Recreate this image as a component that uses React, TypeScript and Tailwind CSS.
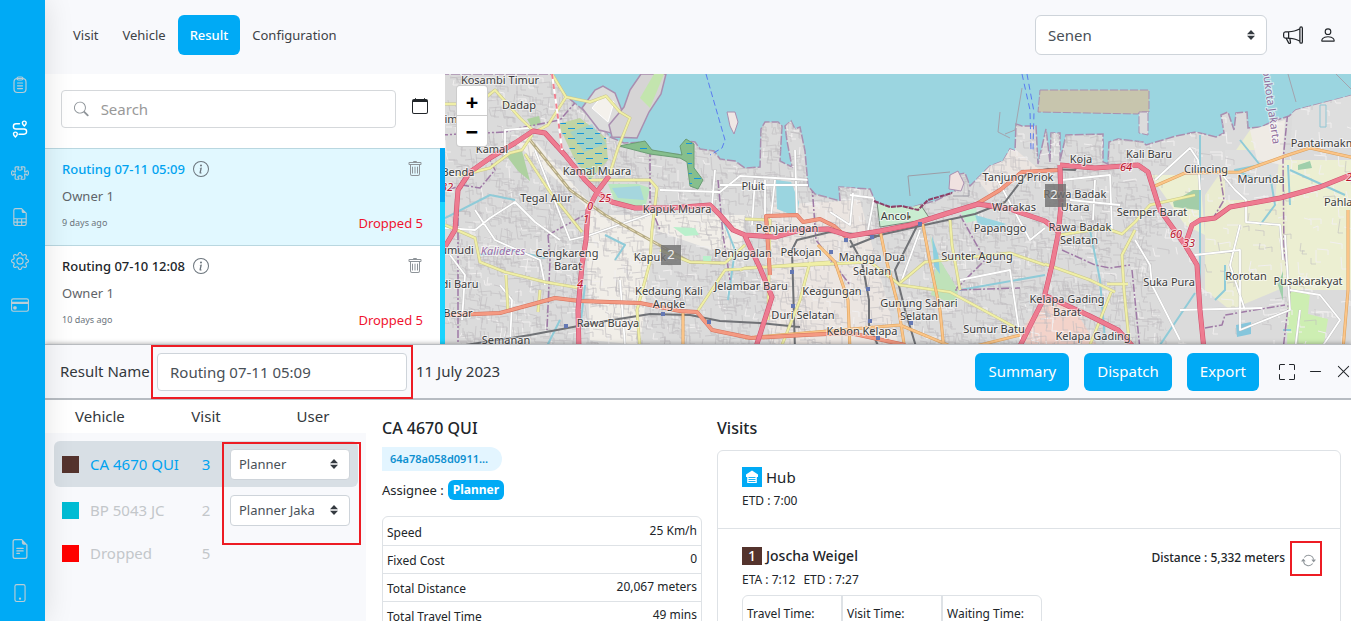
import { useState } from 'react';
import type { ReactNode } from 'react';
import {
  BsArrowRepeat,
  BsCalendar,
  BsCreditCard,
  BsDashLg,
  BsFileEarmarkSpreadsheet,
  BsFileEarmarkText,
  BsFullscreen,
  BsGear,
  BsInfoCircle,
  BsMegaphone,
  BsPerson,
  BsPhone,
  BsPuzzle,
  BsSearch,
  BsTrash,
  BsXLg,
} from 'react-icons/bs';

const routings = [
  { id: 1, name: 'Routing 07-11 05:09', owner: 'Owner 1', age: '9 days ago', dropped: 5 },
  { id: 2, name: 'Routing 07-10 12:08', owner: 'Owner 1', age: '10 days ago', dropped: 5 },
];

const vehicles = [
  { name: 'CA 4670 QUI', visits: 3, color: '#54332d', user: 'Planner' },
  { name: 'BP 5043 JC', visits: 2, color: '#00bcd4', user: 'Planner Jaka' },
  { name: 'Dropped', visits: 5, color: '#ff0000', user: null },
];

const stats = [
  ['Speed', '25 Km/h'],
  ['Fixed Cost', '0'],
  ['Total Distance', '20,067 meters'],
  ['Total Travel Time', '49 mins'],
];

function ClipboardIcon() {
  return (
    <svg width="18" height="18" viewBox="0 0 18 18" fill="none" stroke="currentColor" strokeWidth="1.2" strokeLinecap="round">
      <rect x="3" y="2.5" width="12" height="14" rx="3.5" />
      <rect x="6" y="1" width="6" height="3" rx="1.5" />
      <path d="M6.5 7h5M6.5 9.800h5M6.500 12.600h5" />
    </svg>
  );
}

function RouteIcon() {
  return (
    <svg width="18" height="18" viewBox="0 0 18 18" fill="none" stroke="currentColor" strokeWidth="1.4" strokeLinecap="round">
      <path d="M8.5 3.8H5a2.6 2.6 0 0 0 0 5.2h8a2.6 2.6 0 0 1 0 5.2H8" />
      <path d="M13.300 6c-1.300-1.200-1.900-2-1.900-3a1.900 1.900 0 0 1 3.800 0c0 1-.6 1.800-1.900 3zM4.400 17c-1.300-1.200-1.900-2-1.900-3a1.900 1.900 0 0 1 3.800 0c0 1-.6 1.800-1.900 3z" />
    </svg>
  );
}

function HubIcon() {
  return (
    <svg className="size-5 shrink-0" viewBox="0 0 20 20">
      <rect width="20" height="20" fill="#00aaf5" />
      <path d="M10 3.500 16 7.500V10h-1.200v6H5.200v-6H4V7.500z" fill="#fff" />
      <path d="M6.500 10.500h7M6.500 12.500h7M6.500 14.500h7" stroke="#00aaf5" strokeWidth=".9" />
    </svg>
  );
}

function Chevrons() {
  return (
    <svg className="pointer-events-none absolute top-1/2 right-3 h-[10px] w-2 -translate-y-1/2" viewBox="0 0 8 10" fill="#343a40">
      <path d="M4 0 8 4.200H0zM4 10 0 5.800h8z" />
    </svg>
  );
}

// street level labels, x is the middle of the text and y the baseline
const labels: [string, number, number][] = [
  ['Kosambi Timur', 500, 84],
  ['Dadap', 519, 109],
  ['Kamal', 492, 153],
  ['Benda', 458, 176],
  ['Kamal Muara', 597, 175],
  ['Tegal Alur', 546, 202],
  ['Kapuk Muara', 677, 213],
  ['Pluit', 753, 190],
  ['Cengkareng', 567, 257],
  ['Barat', 568, 270],
  ['Kapuk', 650, 261],
  ['umudi', 457, 254],
  ['di Baru', 460, 288],
  ['Besar', 458, 317],
  ['Kedaung Kali', 669, 295],
  ['Angke', 669, 308],
  ['Rawa Buaya', 608, 327],
  ['Semanan', 506, 344],
  ['Penjaringan', 787, 232],
  ['Penjagalan', 743, 257],
  ['Pekojan', 801, 256],
  ['Jelambar Baru', 751, 290],
  ['Mangga Dua', 872, 261],
  ['Selatan', 872, 275],
  ['Keagungan', 832, 295],
  ['Gunung Sahari', 919, 307],
  ['Selatan', 919, 320],
  ['Duri Selatan', 803, 319],
  ['Kebon Kelapa', 862, 335],
  ['Ancol', 895, 220],
  ['Warakas', 1014, 211],
  ['Papanggo', 1000, 232],
  ['Sunter Agung', 977, 260],
  ['Sumur Batu', 994, 333],
  ['Tanjung Priok', 1018, 181],
  ['Koja', 1081, 163],
  ['Kali Baru', 1149, 158],
  ['Rawa Badak', 1075, 198],
  ['Utara', 1075, 211],
  ['Rawa Badak', 1080, 231],
  ['Selatan', 1079, 244],
  ['Semper Barat', 1152, 216],
  ['Cilincing', 1206, 173],
  ['Marunda', 1261, 183],
  ['Pantaimakmur', 1329, 147],
  ['Pahlawan', 1349, 206],
  ['Suka Pura', 1169, 286],
  ['Rorotan', 1246, 280],
  ['Pusakarakyat', 1308, 285],
  ['Kelapa Gading', 1067, 303],
  ['Barat', 1067, 316],
  ['Kelapa Gading', 1093, 340],
];

const COAST =
  'M440 74H552l14 22 17 14 12 12 15 15 14 6 21-1 6 8 12 4 27 1-8-8 3-6 10 1 5 7 14 2 6 8 15 2 10 7 15 -1 1-38 4-7h13l4 4-2 35 12 6-5-26-2-15 6-5 4 8 5-2 5 24 3 35 7 8 25 7-1-14 31 2 6 14 9 3 27 1 23-6 20-10-5-15 15-3 5 13 20-20 13-5 7-12 5 2 1-27 6 2h14l2 38 8-35 4 33 1-29h9v28l6-26 37-1v28l5 2 1-22 9-3 25 3 3 3 30-9 20-4 20 5 8-4-3-18 7-3 6 18 2-17 11-1 1 16 13-1 10-5 18-6 7-6 61-16V350H440z';

const TRUNK = [
  'M440 255 455 230 458 190 470 172 490 158 515 143 533 131 545 133 565 155 585 180 597 192 612 202 635 208 670 208 710 205 720 215 733 230 745 235 775 237 800 230 828 229 850 236 880 231 910 225 945 214 978 204 1010 209 1045 221 1060 233',
  'M609 176 597 192 588 210 586 240 582 265 578 310 579 350',
  'M745 236 760 268 772 297 755 350',
  'M1060 165 1061 205 1058 235 1052 265 1044 298 1018 350',
  'M1060 165 1095 168 1138 165 1148 172 1160 210 1185 245 1197 265 1200 310 1204 350',
  'M1185 245 1192 225 1200 220 1215 218 1230 207 1280 198 1320 187 1355 173',
  'M1044 295 1090 316 1118 330 1136 350',
];

const PRIMARY = [
  'M440 316 450 315 500 313 555 298 580 301 640 303 680 311 697 312 712 330 751 338 805 335 850 333 905 345',
  'M770 275 766 216 797 215 803 222 820 219 834 226 846 237',
  'M975 205 1000 190 1022 172 1060 170',
];

const SECONDARY = [
  'M922 220 930 262 940 310 944 350',
  'M1155 186 1185 173 1240 172 1285 156 1310 148 1355 158',
  'M1348 210 1348 290 1343 350',
  'M818 245 835 262 848 300 850 350',
  'M880 230 885 255 898 305 905 350',
  'M683 313 683 350',
  'M745 338 900 325 960 350 1020 335',
];

const TERTIARY = [
  'M440 104H478L495 90 520 118 535 132 548 125 566 97 552 74',
  'M566 97 590 102 606 96 620 112 630 118 618 148 609 176',
  'M532 135 522 150 510 153 490 168 458 176',
  'M525 154 550 192 582 232',
  'M445 225 475 238 480 262 505 272 545 282 580 288',
  'M585 180 650 180 657 188 652 230 650 262 637 310 640 350',
  'M660 250 690 262 725 263 745 245',
  'M697 312 725 270 790 265 830 262',
  'M745 219 770 220 768 320',
  'M740 270 745 268 870 262 900 285 950 292 1020 330',
  'M900 283 925 262 1010 253 1045 265',
  'M950 220 952 245 960 290',
  'M1045 264 1090 280 1115 292',
  'M1060 235 1105 228 1122 234 1135 222 1150 205 1195 195',
  'M1135 230 1122 255 1124 290 1130 350',
  'M1107 284 1128 284M1112 290 1090 345',
  'M780 350 800 300 810 262',
  'M506 275 508 312M540 290 538 312',
];

const WHITE = [
  'M445 228 475 230 490 218 515 202 535 222 560 240',
  'M475 210 495 240 540 260 545 285',
  'M535 150 570 240 590 235 650 214',
  'M505 155 505 130 530 128',
  'M660 190 720 192 740 176 810 180',
  'M715 170 712 205M755 180 752 225M765 180 765 215M720 185 808 185',
  'M795 150 797 215M775 180 770 225',
  'M850 195 874 198 868 230M830 212 850 225 853 193',
  'M920 230 900 285M960 280 1010 270 1022 350',
  'M995 175 1030 240 1045 228',
  'M1062 180 1110 175 1112 230M1070 200 1120 205M1095 180 1093 220',
  'M1155 180 1190 148 1198 160 1200 190',
  'M1135 240 1150 265 1152 285 1180 340M1195 255 1240 250 1240 330 1290 310 1285 235',
  'M1240 225 1230 265 1245 310M1220 172 1235 190 1246 200 1246 222 1280 225 1283 260',
  'M1180 310 1262 308M1290 290 1320 295 1340 320 1320 350M1300 310 1295 350',
  'M450 255 465 275 462 320M510 345 512 300 500 285M620 280 625 345',
];

const RAIL = [
  'M440 349 530 335 600 322 650 314 690 315 720 321 760 323 800 327',
  'M795 350 792 250 797 240 830 232 880 236',
  'M918 224 900 260 895 270 905 310 917 350',
  'M850 240 862 262 869 300 869 325 880 350',
  'M850 247 880 235 920 226 975 214 1005 202 1027 173 1048 169 1075 170 1080 160',
];

const BOUNDARY = [
  'M440 135 505 132 520 128 560 120 600 74',
  'M448 190 462 185 480 188 495 170 490 160',
  'M458 190 458 350M548 235 550 260 547 330M548 235 590 212',
  'M650 135 650 205 660 230M718 180 723 235 730 280',
  'M812 185 816 240 850 285',
  'M960 215 985 260 955 290 1020 288',
  'M1132 270 1140 350M1062 250 1095 265 1110 268 1130 265',
  'M1276 74 1288 110 1283 160 1284 250 1290 290 1283 350',
  'M1212 220 1224 200 1220 175M1205 328 1222 325 1225 315 1285 305',
];

const COMMON_GREEN = '#aed1a0';

// short side streets, spread by a fixed seed so the map is the same every time
function sideStreets(count: number, start: number, right: number) {
  let seed = start;
  const next = () => {
    seed = (seed * 16807) % 2147483647;
    return seed / 2147483647;
  };
  let d = '';
  for (let i = 0; i < count; i++) {
    const x = Math.round(445 + next() * (right - 445));
    const y = Math.round(76 + next() * 270);
    const len = Math.round(4 + next() * 10);
    const skew = Math.round(next() * 4) - 2;
    d += next() > 0.5 ? `M${x} ${y}l${len} ${skew}v5` : `M${x} ${y}l${skew} ${len}h5`;
  }
  return d;
}

const streetsLight = sideStreets(650, 17, 1351);
const streetsDark = sideStreets(3200, 4099, 1160);
const streetsEast = sideStreets(260, 811, 1351);

function Paths({ list, stroke, width, dash }: { list: string[]; stroke: string; width: number; dash?: string }) {
  return (
    <path d={list.join('')} fill="none" stroke={stroke} strokeWidth={width} strokeDasharray={dash} strokeLinejoin="round" />
  );
}

function CityMap() {
  return (
    <svg
      className="absolute inset-0 size-full"
      viewBox="445 74 906 270"
      preserveAspectRatio="xMinYMin slice"
      role="img"
      aria-label="Map of Jakarta"
    >
      <defs>
        <clipPath id="land">
          <path d={COAST} />
        </clipPath>
        <pattern id="marsh" width="18" height="10" patternUnits="userSpaceOnUse">
          <path d="M1 3.500h7M10 8.500h7" stroke="#1496dc" strokeWidth="1" />
        </pattern>
      </defs>
      <rect x="440" y="70" width="920" height="290" fill="#9bd5e0" />
      <path d={COAST} fill="#dbdbdb" stroke="#a98fb0" strokeWidth="1.5" strokeDasharray="9 2" />

      <g clipPath="url(#land)">
        <path d="M515 143 585 205 590 340 640 345 655 230 740 260 745 215 600 215 530 135z" fill="#f1eee8" />
        <path d="M770 205 860 200 900 350H770zM965 165l45-20 30 25-50 25z" fill="#ebe5e1" />
        <path d="M1205 195 1250 130 1285 160 1355 165V290L1290 285 1230 310 1205 290z" fill="#eaecd0" />
        <path d="M1150 175h50l5 60-20-10zM1285 160h70v130h-65z" fill="#ecefd2" />
        <path d="M1225 150h55l-5 50h-50zM1295 74h60v70l-65 10z" fill="#dedede" />
        <path d="M1250 130l35-10-3 45-25-5z" fill="#efebe5" />
        <path d="M1045 295l30 15 25 40h-75zM1018 335l25-35-10 50z" fill="#f3d3ca" />
        <path d="M1288 292h22l-2 22 20 5-5 30h-36z" fill="#cdeeb2" />
        <path d={streetsLight} fill="none" stroke="#f1efef" strokeWidth="1" />
        <path d={streetsDark} fill="none" stroke="#c0bcc0" strokeWidth=".6" />
        <path d={streetsEast} fill="none" stroke="#c0bcc0" strokeWidth=".6" />

        <path d="M558 124 580 118 606 138 608 160 590 180 575 160z" fill="#c0d4a4" />
        <path d="M570 132l22-8 14 20-22 8z" fill="#8fd0db" opacity=".6" />
        <path d="M558 124 580 118 606 138 608 160 590 180 575 160z" fill="url(#marsh)" />
        <path d="M506 155l16-4 8 30-12-10zM527 119l12-3 2 8-10 2z" fill={COMMON_GREEN} />
        <path d="M608 184h30l12 4-5 20-30-6z" fill="#b9e6c0" />
        <path d="M612 188l28-2 4 14-26-2z" fill="#a5d6de" />
        <path d="M673 227l22 1 4 7-14 1zM703 256h8v8h-8z" fill="#baf0cc" />
        <path d="M776 180l15 2 8 20-2 15-20-8z" fill="#9bd5e0" />
        <path d="M877 202l43 2 10 15-50 8z" fill="#c9ecd0" stroke="#75887a" />
        <path d="M930 235l6 30-5 30 25 10 2-15-18-30z" fill="#bfe2b9" />
        <path d="M932 236l6 18 2 20-6-8z" fill="#8ccfdf" />
        <path d="M961 212l15-4 2 12-12 3z" fill="#c0efcf" />
        <path d="M975 215l25 7 6 2-8 4-20-4z" fill="#9bd5e0" />
        <path d="M1173 202l20-12h8l-2 20-25-3z" fill="#a3cda8" />
        <path d="M1153 262l20-10 15 8 10 20-2 70-30-20-12-40z" fill="#dbdbdb" />
        <path d="M1278 285l5-14v30zM1298 165l12-4 2 7-14 2z" fill="#9fcfab" />
        <path d="M1236 325l15-3v12l-14 3z" fill="#86c6dc" />
        <path d="M1320 105h6v22h-6z" fill="#dedede" stroke="#8fc6d4" />
        <Paths
          list={[
            'M445 218 490 195 515 200M480 255 510 250 545 258M585 285 580 330M560 320 545 350',
            'M605 235 625 245 615 260M1288 165 1290 205M1270 175 1275 205 1260 225M1200 135V310',
            'M1195 293 1160 345M1225 265v25l-10 10M960 290 1045 275M1283 330h8M1290 170l55 25M1240 140l20 25-25 5 18 8',
            'M720 212 735 250 728 300M1090 230 1100 280 1105 340',
          ]}
          stroke="#8fcbd8"
          width={2}
        />
        <Paths list={BOUNDARY} stroke="#9f7aa6" width={1.5} dash="8 2 2 2" />
        <Paths list={WHITE} stroke="#bfbfbf" width={2.6} />
        <Paths list={WHITE} stroke="#fff" width={1.8} />
        <Paths list={RAIL} stroke="#707276" width={2} />
        <Paths list={['M530 140 570 190 605 215 650 240 690 262 720 263']} stroke="#b5ab86" width={3} />
        <Paths list={['M530 140 570 190 605 215 650 240 690 262 720 263']} stroke="#eee3bd" width={1} dash="6 3" />
      </g>

      <path d="M582 108l13-18 8-4 12 7 7 18-11 22-12-3z" fill="#dcdcdc" stroke="#a98fb0" strokeWidth="1.500" />
      <path d="M592 108l10-12 12 6-6 20z" fill="#f4f1ec" stroke="#fff" />
      <path d="M630 90 641 74h25l-5 20-12 18-12 26-25-1-3-12 15-18z" fill="#d6d4d5" stroke="#a98fb0" strokeWidth="1.500" />
      <path d="M640 98l14-24h10l-14 34z" fill="#c3e5ae" />
      <path d="M619 146 645 141 652 150 682 155 680 146 686 139 694 144 694 168 703 180 698 189 690 186 687 162 680 158 650 154z" fill="#86bf8d" stroke="#6a9d74" />
      <path d="M634 144h14v8h-14zM686 143h8v25l8 12-4 8h-8z" fill="url(#marsh)" />
      <path d="M727 112h8l3 10-4 12-4-8z" fill="#efe7e5" stroke="#a98fb0" />
      <path d="M1040 90h109v22h-9l-2 2-100-2z" fill="#c7c5ad" stroke="#a98fb0" strokeDasharray="8 2" />
      <path d="M1139 112h9v23l-9-2z" fill="#dcdcdc" stroke="#a98fb0" strokeDasharray="8 2" />
      <path d="M950 175l8-4 6 12-3 8-12-2z" fill="#f0e2e0" stroke="#a98fb0" />
      <path d="M874 201 890 207 902 206 918 210 928 200 952 193" fill="none" stroke="#8d3f66" strokeWidth="2" strokeDasharray="5 1" />
      <path d="M953 196h16v-6M910 196l-2-20 42-4" fill="none" stroke="#9d9da6" />
      <path d="M1022 88 1015 130 1005 134M1000 112l-2 20 12 6M1336 74l15 15M1288 74l8 28" fill="none" stroke="#a3a3ae" />
      <path d="M706 74 725 140 722 148 710 155" fill="none" stroke="#5a7cf0" strokeDasharray="6 3" />
      <path d="M1022 74 1030 110 1031 150M1027 74 1034 112 1033 150" fill="none" stroke="#5a7cf0" strokeDasharray="6 4" />

      <Paths list={TERTIARY} stroke="#c9c78a" width={3} />
      <Paths list={TERTIARY} stroke="#f0efa6" width={2} />
      <Paths list={SECONDARY} stroke="#dba05c" width={3} />
      <Paths list={SECONDARY} stroke="#fbc588" width={2} />
      <Paths list={PRIMARY} stroke="#d4705c" width={4} />
      <Paths list={PRIMARY} stroke="#f49a82" width={3} />
      <Paths list={TRUNK} stroke="#cf4f6c" width={5} />
      <Paths list={TRUNK} stroke="#ee7c91" width={4} />
      <path d="M552 74 557 110 562 150" fill="none" stroke="#fff" strokeWidth="2" />
      <path d="M552 74 557 110 562 150" fill="none" stroke="#ef8090" strokeWidth="2" strokeDasharray="5 5" />
      <path
        d="M564 324h4v4h-4zM661 312h4v4h-4zM707 320h4v4h-4zM829 250h4v4h-4zM844 238h4v4h-4zM870 235h4v4h-4zM918 222h4v4h-4zM866 287h4v4h-4zM868 319h4v4h-4zM790 270h4v4h-4zM791 304h4v4h-4zM909 321h4v4h-4zM876 336h4v4h-4z"
        fill="#6478b4"
      />
      <circle cx="909" cy="217" r="1.500" />

      <g
        className="font-['Noto_Sans',sans-serif] text-[11px]"
        fill="#3c3c3c"
        stroke="#fff"
        strokeWidth="2"
        strokeOpacity=".6"
        paintOrder="stroke"
        textAnchor="middle"
      >
        {labels.map(([name, x, y]) => (
          <text key={`${name}${x}${y}`} x={x} y={y}>
            {name}
          </text>
        ))}
        <text x="451" y="123">im</text>
        <text x="503" y="255" fill="#9a6ea6" fontStyle="italic">Kalideres</text>
        <text transform="translate(1263 74) rotate(82)" textAnchor="start" fill="#8f6d9c" x="-4" y="0">bukota Jakarta</text>
        <g fill="#b8142c" fontStyle="italic">
          <text x="447" y="191">32</text>
          <text x="605" y="202">25</text>
          <text x="590" y="210">0</text>
          <text x="586" y="223">1</text>
          <text x="580" y="288">4</text>
          <text x="1126" y="171">64</text>
          <text x="1176" y="238">60</text>
          <text x="1189" y="247">33</text>
          <text x="1349" y="181">2</text>
        </g>
      </g>
      <g className="font-['Noto_Sans',sans-serif] text-[13px]" textAnchor="middle">
        <rect x="661" y="245" width="20" height="20" fill="#6f6f6f" fillOpacity=".8" />
        <text x="671" y="259" fill="#eee">2</text>
        <rect x="1045" y="184" width="21" height="23" fill="#6f6f6f" fillOpacity=".8" />
        <text x="1054" y="199" fill="#eee">2</text>
      </g>
    </svg>
  );
}

function SideLink({ label, active, children }: { label: string; active?: boolean; children: ReactNode }) {
  return (
    <a
      href="#"
      aria-label={label}
      className={`flex h-11 w-10 items-center justify-center ${active ? 'text-white' : 'text-[#b9cdd6]'}`}
    >
      {children}
    </a>
  );
}

function Sidebar() {
  return (
    <nav className="z-10 flex w-[45px] shrink-0 flex-col justify-between bg-[#00aaf5] pt-[63px] pb-[6px] shadow-[0_0_30px_rgba(0,0,0,0.12)]">
      <div>
        <SideLink label="Orders"><ClipboardIcon /></SideLink>
        <SideLink label="Routing" active><RouteIcon /></SideLink>
        <SideLink label="Integrations"><BsPuzzle size={18} /></SideLink>
        <SideLink label="Reports"><BsFileEarmarkSpreadsheet size={18} /></SideLink>
        <SideLink label="Settings"><BsGear size={18} /></SideLink>
        <SideLink label="Billing"><BsCreditCard size={18} /></SideLink>
      </div>
      <div>
        <SideLink label="Documentation"><BsFileEarmarkText size={20} /></SideLink>
        <SideLink label="Mobile app"><BsPhone size={18} /></SideLink>
      </div>
    </nav>
  );
}

function Header() {
  const tabs = ['Visit', 'Vehicle', 'Result', 'Configuration'];
  return (
    <header className="flex items-center justify-between bg-[#f8f9fc] pt-[15px] pr-[14px] pb-[19px] pl-4">
      <nav className="flex">
        {tabs.map((tab) => (
          <a
            key={tab}
            href="#"
            className={`rounded-md px-3 text-[13px] leading-10 ${
              tab === 'Result' ? 'bg-[#00aaf5] font-medium text-white' : 'text-[#3d4246]'
            }`}
          >
            {tab}
          </a>
        ))}
      </nav>
      <div className="flex items-center gap-4">
        <div className="relative">
          <select
            aria-label="Hub"
            className="block h-10 w-[232px] appearance-none rounded-md border border-[#ced4da] bg-white px-3 text-[15px] text-[#495057]"
          >
            <option>Senen</option>
          </select>
          <Chevrons />
        </div>
        <button aria-label="Announcements" className="text-[#212529]"><BsMegaphone size={20} /></button>
        <button aria-label="Account" className="text-[#212529]"><BsPerson size={18} /></button>
      </div>
    </header>
  );
}

function RoutingList({ selected, onSelect }: { selected: number; onSelect: (id: number) => void }) {
  return (
    <section className="flex w-[400px] shrink-0 flex-col bg-white">
      <div className="flex items-start gap-4 pt-4 pr-[17px] pb-5 pl-4">
        <label className="flex h-[38px] flex-1 items-center gap-3 rounded border border-[#d5d8db] px-3 text-[#8e9499]">
          <BsSearch size={16} />
          <input
            type="search"
            aria-label="Search"
            placeholder="Search"
            className="w-full text-[15px] outline-none placeholder:text-[#999]"
          />
        </label>
        <button aria-label="Pick a date" className="mt-2 text-[#212529]"><BsCalendar size={16} /></button>
      </div>
      <div className="flex">
        <ul className="flex-1 pb-0.5">
          {routings.map((r) => (
            <li
              key={r.id}
              onClick={() => onSelect(r.id)}
              className={`space-y-[7px] border-t border-[#b9d7e0] px-[17px] pt-[10px] pb-3 leading-5 ${
                r.id === selected ? 'bg-[#e1f8ff]' : 'bg-white'
              }`}
            >
              <div className="flex items-center justify-between">
                <div className="flex items-center gap-2">
                  <h3 className={`text-[13px] font-medium ${r.id === selected ? 'text-[#00a3f0]' : 'text-[#212529]'}`}>
                    {r.name}
                  </h3>
                  <BsInfoCircle size={16} className="text-[#6c757d]" />
                </div>
                <button aria-label={`Delete ${r.name}`} className="text-[#8e9499]"><BsTrash size={16} /></button>
              </div>
              <p className="text-[13px] text-[#5f6469]">{r.owner}</p>
              <div className="flex justify-between">
                <span className="text-[9px] text-[#6c757d]">{r.age}</span>
                <span className="text-[13px] text-[#f0142f]">Dropped {r.dropped}</span>
              </div>
            </li>
          ))}
        </ul>
        <div className="w-[5px] bg-[#1ad4ff]">
          <div className="h-[54px] bg-[#00a9f5]" />
        </div>
      </div>
    </section>
  );
}

function Highlight({ className }: { className: string }) {
  return <span className={`pointer-events-none absolute border-2 border-[#ed1c24] ${className}`} />;
}

function VehicleTable() {
  return (
    <div className="w-[321px] shrink-0 bg-[#f8f9fc]">
      <table className="w-full table-fixed text-[15px]">
        <thead className="bg-white text-[#33383c]">
          <tr className="h-[33px]">
            <th className="w-[143px] pl-[30px] text-left font-normal">Vehicle</th>
            <th className="w-9 text-center font-normal">Visit</th>
            <th className="pl-9 text-center font-normal">User</th>
          </tr>
        </thead>
        <tbody className="before:block before:h-2 before:content-['']">
          {vehicles.map((v, i) => {
            const tone = i === 0 ? 'bg-[#d8dfe5] text-[#00a3f0]' : 'text-[#c3c7ca]';
            const height = v.user ? 'h-[46px]' : 'h-10';
            return (
              <tr key={v.name}>
                <td>
                  <div className={`ml-[9px] flex items-center gap-[11px] rounded-l-md pl-2 ${height} ${tone}`}>
                    <span className="size-[17px]" style={{ backgroundColor: v.color }} />
                    {v.name}
                  </div>
                </td>
                <td>
                  <div className={`flex items-center justify-center ${height} ${tone}`}>{v.visits}</div>
                </td>
                <td className="relative">
                  <div className={`mr-2 flex items-center rounded-r-md pr-2 pl-[6px] ${height} ${tone}`}>
                    {v.user && (
                      <div className="relative w-full">
                        <select
                          aria-label={`User for ${v.name}`}
                          className="block h-[31px] w-full appearance-none rounded border border-[#ced4da] bg-white px-2 pt-px text-[13px] text-[#495057]"
                        >
                          <option>{v.user}</option>
                        </select>
                        <Chevrons />
                      </div>
                    )}
                  </div>
                  {i === 0 && <Highlight className="top-px -left-[2px] h-[103px] w-[139px]" />}
                </td>
              </tr>
            );
          })}
        </tbody>
      </table>
    </div>
  );
}

function VehicleDetail() {
  return (
    <section className="w-80 shrink-0 text-[#212529]">
      <h2 className="pt-4 text-[16px] leading-6 font-medium">CA 4670 QUI</h2>
      <p className="mt-[7px] w-[120px] rounded-l-sm rounded-r-full bg-[#e3f5ff] pl-2 text-[11px] leading-6 font-semibold text-[#0c8fd0]">
        64a78a058d0911...
      </p>
      <p className="mt-[9px] flex items-center gap-1 text-[13px] leading-5">
        Assignee :
        <span className="rounded-md bg-[#00aaf5] px-[5px] text-[12px] font-bold text-white">Planner</span>
      </p>
      <div className="mt-4 rounded-t-md border border-[#dee2e6]">
        <table className="w-full text-[12px]">
          <tbody>
            {stats.map(([label, value]) => (
              <tr key={label} className="h-7 border-b border-[#dee2e6]">
                <th className="pt-1 pl-1 text-left font-normal">{label}</th>
                <td className="pr-1 text-right">{value}</td>
              </tr>
            ))}
          </tbody>
        </table>
      </div>
    </section>
  );
}

function Visits() {
  return (
    <section className="min-w-0 flex-1 text-[#212529]">
      <h2 className="pt-4 text-[16px] leading-6 font-medium">Visits</h2>
      <div className="mt-[10px] rounded-t-md border border-[#dee2e6]">
        <div className="border-b border-[#dee2e6] px-6 pt-4 pb-[17px]">
          <div className="flex items-center gap-1 text-[15px] leading-5">
            <HubIcon />
            Hub
          </div>
          <p className="mt-1 text-[12px] leading-5">ETD : 7:00</p>
        </div>
        <div className="px-6 pt-[17px]">
          <div className="flex justify-between">
            <div>
              <h3 className="flex items-center gap-1 text-[14px] leading-5 font-medium">
                <span className="h-[18px] w-5 bg-[#54332d] text-center leading-[18px] text-white">1</span>
                Joscha Weigel
              </h3>
              <p className="mt-1 flex gap-2 text-[12px] leading-5">
                <span>ETA : 7:12</span>
                <span>ETD : 7:27</span>
              </p>
            </div>
            <div className="relative flex h-6 items-center gap-4 text-[12px] font-medium">
              Distance : 5,332 meters
              <button aria-label="Recalculate distance" className="mt-1 text-[#8e9499]"><BsArrowRepeat size={15} /></button>
              <Highlight className="-top-[5px] -right-[6px] h-[35px] w-8" />
            </div>
          </div>
          <table className="mt-[5px] w-[300px] table-fixed border-separate border-spacing-0 rounded-t-md border border-[#dee2e6] text-left text-[12px]">
            <thead>
              <tr className="h-9">
                <th className="w-[100px] border-r-2 border-[#dee2e6] pl-1 font-normal">Travel Time:</th>
                <th className="w-[100px] border-r-2 border-[#dee2e6] pl-1 font-normal">Visit Time:</th>
                <th className="pl-1 font-normal">Waiting Time:</th>
              </tr>
            </thead>
          </table>
        </div>
      </div>
    </section>
  );
}

function ResultPanel({ name, onRename }: { name: string; onRename: (name: string) => void }) {
  const action = 'h-[38px] rounded-md bg-[#00aaf5] px-[13px] text-[15px] text-white';
  return (
    <section className="relative flex min-h-0 flex-1 flex-col border-t border-[#b9bcc0] bg-white shadow-[0_-1px_4px_rgba(0,0,0,0.25)]">
      <div className="flex shrink-0 items-center justify-between border-b-2 border-[#b7bcc2] bg-[#f8f9fc] pl-[15px]">
        <div className="flex h-[53px] items-center text-[15px] text-[#33383c]">
          <label htmlFor="result-name" className="w-[97px] whitespace-nowrap">Result Name</label>
          <div className="relative mr-[9px]">
            <input
              id="result-name"
              value={name}
              onChange={(e) => onRename(e.target.value)}
              className="block h-[38px] w-[250px] rounded border border-[#ced4da] bg-white px-3 text-[15px] text-[#495057]"
            />
            <Highlight className="-inset-x-[6px] -inset-y-2" />
          </div>
          11 July 2023
        </div>
        <div className="flex items-center gap-[15px]">
          <button className={action}>Summary</button>
          <button className={action}>Dispatch</button>
          <button className={action}>Export</button>
          <div className="flex items-center gap-[13px] pl-[5px] text-[#212529]">
            <button aria-label="Full screen"><BsFullscreen size={16} /></button>
            <button aria-label="Minimize"><BsDashLg size={15} /></button>
            <button aria-label="Close"><BsXLg size={15} /></button>
          </div>
        </div>
      </div>
      <div className="flex min-h-0 flex-1 overflow-hidden pr-[10px]">
        <VehicleTable />
        <div className="flex min-w-0 flex-1 gap-[15px] pl-4">
          <VehicleDetail />
          <Visits />
        </div>
      </div>
    </section>
  );
}

export default function App() {
  const [selected, setSelected] = useState(1);
  const [resultName, setResultName] = useState('Routing 07-11 05:09');

  return (
    <div className="flex h-screen overflow-hidden bg-white font-['Noto_Sans',sans-serif]">
      <Sidebar />
      <main className="flex min-w-0 flex-1 flex-col">
        <Header />
        <div className="flex">
          <RoutingList selected={selected} onSelect={setSelected} />
          <div className="relative flex-1 overflow-hidden">
            <CityMap />
            <div className="absolute top-[11px] left-[11px] flex w-8 flex-col rounded-sm border border-black/20 bg-white text-[22px] font-bold text-black">
              <button aria-label="Zoom in" className="h-[30px] border-b border-[#ccc] leading-[30px]">+</button>
              <button aria-label="Zoom out" className="h-[30px] leading-[30px]">−</button>
            </div>
          </div>
        </div>
        <ResultPanel name={resultName} onRename={setResultName} />
      </main>
    </div>
  );
}
